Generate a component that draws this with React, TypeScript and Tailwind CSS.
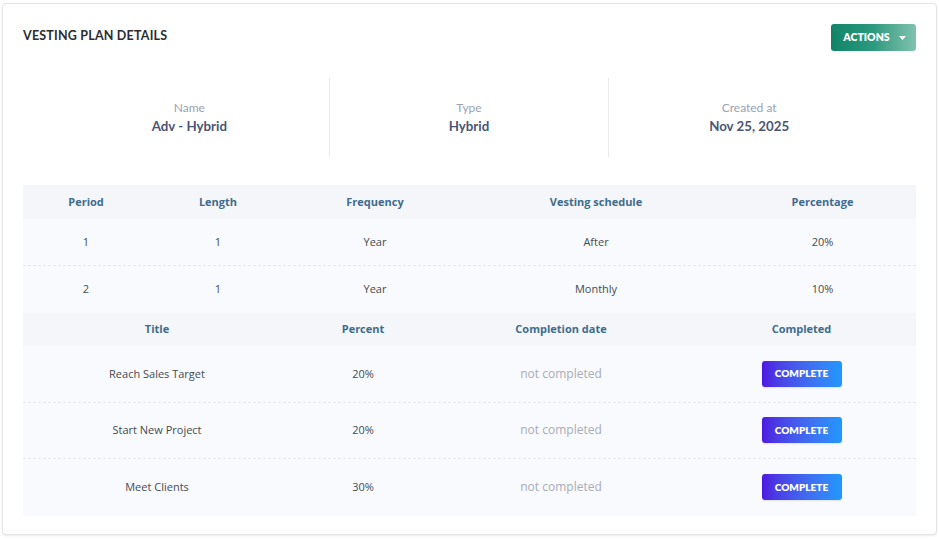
import React from "react";

const font = { fontFamily: "Lato, 'Open Sans', sans-serif" };
const os = { fontFamily: "'Open Sans', Lato, sans-serif" };

function CompleteBtn() {
  return (
    <button className="w-[80px] h-[26px] rounded-[3px] bg-gradient-to-r from-[#4d17e0] to-[#1f98fc] text-white text-[10px] font-extrabold shadow-[0_1px_2px_rgba(0,0,0,0.1)]" style={font}>
      COMPLETE
    </button>
  );
}

export default function App() {
  const periods = [
    ["1", "1", "Year", "After", "20%"],
    ["2", "1", "Year", "Monthly", "10%"],
  ];
  const goals = [
    ["Reach Sales Target", "20%"],
    ["Start New Project", "20%"],
    ["Meet Clients", "30%"],
  ];
  return (
    <div className="w-[939px] h-[539px] bg-white pt-[3px] pl-[2px]" style={font}>
      <div className="w-[935px] h-[532px] rounded-[4px] border border-[#e3e4e6] shadow-[0_1px_2px_rgba(0,0,0,0.08)] bg-white px-[20px] pt-[19px]">
        <div className="flex items-start justify-between">
          <h1 className="mt-[4px] text-[12.5px] font-bold text-[#2b2d31] tracking-[0.2px]">VESTING PLAN DETAILS</h1>
          <button className="mt-[1px] w-[85px] h-[27px] rounded-[3px] bg-gradient-to-r from-[#108468] via-[#2b9a7e] to-[#7fc2af] text-white text-[10.5px] font-extrabold flex items-center justify-center gap-[9px] pl-[2px]">
            ACTIONS
            <svg width="7" height="4" viewBox="0 0 7 4"><path d="M0 0h7L3.5 4z" fill="white" /></svg>
          </button>
        </div>

        <div className="mx-[27px] mt-[27px] grid grid-cols-3 h-[79px]">
          {[
            ["Name", "Adv - Hybrid"],
            ["Type", "Hybrid"],
            ["Created at", "Nov 25, 2025"],
          ].map(([l, v], i) => (
            <div key={l} className={`flex flex-col items-center pt-[22px] ${i < 2 ? "border-r border-[#e9eaec]" : ""}`}>
              <div className="text-[12px] text-[#9aa2b4] leading-[16px]">{l}</div>
              <div className="text-[13.3px] font-bold text-[#4b5573] leading-[18px] mt-[1px]">{v}</div>
            </div>
          ))}
        </div>

        <div className="mt-[28px]" style={os}>
          <div className="grid grid-cols-[126px_138px_176px_266px_1fr] h-[34px] bg-[#f4f6f9] items-center text-center text-[11px] font-bold text-[#3e6c8d]">
            <div>Period</div><div>Length</div><div>Frequency</div><div>Vesting schedule</div><div>Percentage</div>
          </div>
          {periods.map((r, i) => (
            <div key={i} className={`grid grid-cols-[126px_138px_176px_266px_1fr] h-[47px] bg-[#f9fafd] items-center text-center text-[11px] text-[#464a50] ${i === 0 ? "border-b border-dashed border-[#e6e8ee]" : ""}`}>
              {r.map((c, j) => <div key={j}>{c}</div>)}
            </div>
          ))}
          <div className="grid grid-cols-[268px_144px_252px_1fr] h-[33px] bg-[#f4f6f9] items-center text-center text-[11px] font-bold text-[#3e6c8d]">
            <div>Title</div><div>Percent</div><div>Completion date</div><div>Completed</div>
          </div>
          {goals.map((g, i) => (
            <div key={i} className={`grid grid-cols-[268px_144px_252px_1fr] h-[56.5px] bg-[#f9fafd] items-center text-center text-[11px] text-[#464a50] ${i < 2 ? "border-b border-dashed border-[#e6e8ee]" : ""}`}>
              <div>{g[0]}</div>
              <div>{g[1]}</div>
              <div className="text-[12px] text-[#a8acb6]">not completed</div>
              <div className="flex justify-center"><CompleteBtn /></div>
            </div>
          ))}
        </div>
      </div>
    </div>
  );
}
